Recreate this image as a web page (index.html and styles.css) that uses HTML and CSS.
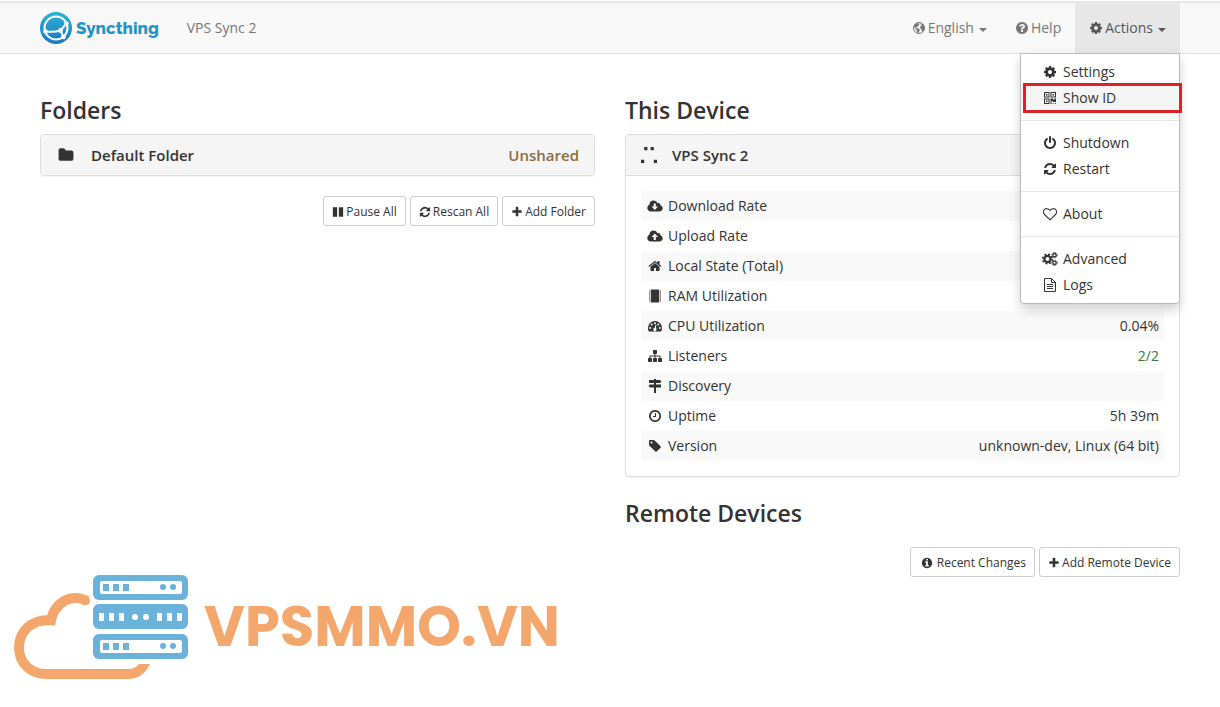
FILE: index.html
```
<!DOCTYPE html>
<html lang="en">
<head>
    <meta charset="UTF-8">
    <meta name="viewport" content="width=device-width, initial-scale=1.0">
    <title>VPS Sync 2 | Syncthing</title>
    <link rel="stylesheet" href="styles.css">
</head>
<body>
    <svg class="sprite" aria-hidden="true">
        <symbol id="cog" viewBox="0 0 1792 1792"><path d="M1152 896q0-106-75-181t-181-75-181 75-75 181 75 181 181 75 181-75 75-181zm512-109v222q0 12-8 23t-20 13l-185 28q-19 54-39 91 35 50 107 138 10 12 10 25t-9 23q-27 37-99 108t-94 71q-12 0-26-9l-138-108q-44 23-91 38-16 136-29 186-7 28-36 28h-222q-14 0-24.500-8.500t-11.500-21.500l-28-184q-49-16-90-37l-141 107q-10 9-25 9-14 0-25-11-126-114-165-168-7-10-7-23 0-12 8-23 15-21 51-66.500t54-70.500q-27-50-41-99l-183-27q-13-2-21-12.500t-8-23.500v-222q0-12 8-23t19-13l186-28q14-46 39-92-40-57-107-138-10-12-10-24 0-10 9-23 26-36 98.500-107.500t94.500-71.500q13 0 26 10l138 107q44-23 91-38 16-136 29-186 7-28 36-28h222q14 0 24.500 8.500t11.500 21.500l28 184q49 16 90 37l142-107q9-9 24-9 13 0 25 10 129 119 165 170 7 8 7 22 0 12-8 23-15 21-51 66.500t-54 70.500q26 50 41 98l183 28q13 2 21 12.500t8 23.500z"/></symbol>
        <symbol id="refresh" viewBox="0 0 1792 1792"><path d="M1639 1056q0 5-1 7-64 268-268 434.500t-478 166.500q-146 0-282.500-55t-243.500-157l-129 129q-19 19-45 19t-45-19-19-45v-448q0-26 19-45t45-19h448q26 0 45 19t19 45-19 45l-137 137q71 66 161 102t187 36q134 0 250-65t186-179q11-17 53-117 8-23 30-23h192q13 0 22.500 9.500t9.500 22.500zm25-800v448q0 26-19 45t-45 19h-448q-26 0-45-19t-19-45 19-45l138-138q-148-137-349-137-134 0-250 65t-186 179q-11 17-53 117-8 23-30 23h-199q-13 0-22.500-9.500t-9.500-22.500v-7q65-268 270-434.500t480-166.500q146 0 284 55.500t245 156.500l130-129q19-19 45-19t45 19 19 45z"/></symbol>
        <symbol id="power" viewBox="0 0 1792 1792"><path d="M1664 896q0 156-61 298t-164 245-245 164-298 61-298-61-245-164-164-245-61-298q0-182 80.500-343t226.500-270q43-32 95.500-25t83.500 50q32 42 24.500 94.500t-49.500 84.500q-98 74-151.500 181t-53.500 228q0 104 40.500 198.500t109.500 163.500 163.500 109.500 198.500 40.500 198.500-40.500 163.500-109.500 109.500-163.500 40.500-198.500q0-121-53.500-228t-151.500-181q-42-32-49.500-84.500t24.500-94.500q31-43 84-50t95 25q146 109 226.500 270t80.500 343zm-640-768v640q0 52-38 90t-90 38-90-38-38-90v-640q0-52 38-90t90-38 90 38 38 90z"/></symbol>
        <symbol id="plus" viewBox="0 0 1792 1792"><path d="M1600 736v192q0 40-28 68t-68 28h-416v416q0 40-28 68t-68 28h-192q-40 0-68-28t-28-68v-416h-416q-40 0-68-28t-28-68v-192q0-40 28-68t68-28h416v-416q0-40 28-68t68-28h192q40 0 68 28t28 68v416h416q40 0 68 28t28 68z"/></symbol>
        <symbol id="question" viewBox="0 0 1792 1792"><path d="M1024 1376v-192q0-14-9-23t-23-9h-192q-14 0-23 9t-9 23v192q0 14 9 23t23 9h192q14 0 23-9t9-23zm256-672q0-88-55.500-163t-138.500-116-170-41q-243 0-371 213-15 24 8 42l132 100q7 6 19 6 16 0 25-12 53-68 86-92 34-24 86-24 48 0 85.500 26t37.500 59q0 38-20 61t-68 45q-63 28-115.500 86.500t-52.500 125.500v36q0 14 9 23t23 9h192q14 0 23-9t9-23q0-19 21.500-49.500t54.500-49.500q32-18 49-28.500t46-35 44.500-48 28-60.500 12.500-81zm384 192q0 209-103 385.500t-279.500 279.500-385.500 103-385.500-103-279.500-279.500-103-385.500 103-385.500 279.500-279.500 385.500-103 385.500 103 279.500 279.500 103 385.500z"/></symbol>
        <symbol id="info" viewBox="0 0 1792 1792"><path d="M1152 1376v-160q0-14-9-23t-23-9h-96v-512q0-14-9-23t-23-9h-320q-14 0-23 9t-9 23v160q0 14 9 23t23 9h96v320h-96q-14 0-23 9t-9 23v160q0 14 9 23t23 9h448q14 0 23-9t9-23zm-128-896v-160q0-14-9-23t-23-9h-192q-14 0-23 9t-9 23v160q0 14 9 23t23 9h192q14 0 23-9t9-23zm640 416q0 209-103 385.500t-279.500 279.500-385.500 103-385.500-103-279.500-279.500-103-385.500 103-385.500 279.500-279.500 385.500-103 385.500 103 279.500 279.500 103 385.500z"/></symbol>
        <symbol id="clock" viewBox="0 0 1792 1792"><path d="M1024 544v448q0 14-9 23t-23 9h-320q-14 0-23-9t-9-23v-64q0-14 9-23t23-9h224v-352q0-14 9-23t23-9h64q14 0 23 9t9 23zm416 352q0-148-73-273t-198-198-273-73-273 73-198 198-73 273 73 273 198 198 273 73 273-73 198-198 73-273zm224 0q0 209-103 385.500t-279.500 279.500-385.500 103-385.500-103-279.500-279.500-103-385.500 103-385.500 279.500-279.500 385.500-103 385.500 103 279.500 279.500 103 385.500z"/></symbol>
        <symbol id="sitemap" viewBox="0 0 1792 1792"><path d="M1792 1248v320q0 40-28 68t-68 28h-320q-40 0-68-28t-28-68v-320q0-40 28-68t68-28h96v-192h-512v192h96q40 0 68 28t28 68v320q0 40-28 68t-68 28h-320q-40 0-68-28t-28-68v-320q0-40 28-68t68-28h96v-192h-512v192h96q40 0 68 28t28 68v320q0 40-28 68t-68 28h-320q-40 0-68-28t-28-68v-320q0-40 28-68t68-28h96v-192q0-52 38-90t90-38h512v-192h-96q-40 0-68-28t-28-68v-320q0-40 28-68t68-28h320q40 0 68 28t28 68v320q0 40-28 68t-68 28h-96v192h512q52 0 90 38t38 90v192h96q40 0 68 28t28 68z"/></symbol>
        <symbol id="folder" viewBox="0 0 1792 1792"><path d="M1728 608v704q0 92-66 158t-158 66h-1216q-92 0-158-66t-66-158v-960q0-92 66-158t158-66h320q92 0 158 66t66 158v32h672q92 0 158 66t66 158z"/></symbol>
        <symbol id="tag" viewBox="0 0 1792 1792"><path d="M576 448q0-53-37.500-90.500t-90.500-37.500-90.500 37.500-37.500 90.500 37.500 90.500 90.500 37.500 90.500-37.500 37.500-90.500zm1067 576q0 53-37 90l-491 492q-39 37-91 37-53 0-90-37l-715-716q-38-37-64.500-101t-26.500-117v-416q0-52 38-90t90-38h416q53 0 117 26.500t102 64.500l715 714q37 39 37 91z"/></symbol>
        <symbol id="home" viewBox="0 0 1792 1792"><path d="M1472 992v480q0 26-19 45t-45 19h-384v-384h-256v384h-384q-26 0-45-19t-19-45v-480q0-1 .5-3t.5-3l575-474 575 474q1 2 1 6zm223-69l-62 74q-8 9-21 11h-3q-13 0-21-7l-692-577-692 577q-12 8-24 7-13-2-21-11l-62-74q-8-10-7-23.500t11-21.500l719-599q32-26 76-26t76 26l244 204v-195q0-14 9-23t23-9h192q14 0 23 9t9 23v408l219 182q10 8 11 21.500t-7 23.500z"/></symbol>
        <symbol id="globe" viewBox="0 0 14 14"><circle cx="7" cy="7" r="5.500" fill="none" stroke="currentColor"/><path d="M2.500 3.500l2.500-1.500 2 .5.500 1-1.500 1 .5 1-2 .5-.5 1 2.500.5 1.500 1.500-1 1.500-.5 2-1.500-1.500-.5-2.500-1.500-1.500-1-2zM8.500 2l3 1.500 1 3-.5 3-2 1.500-.5-2.500-1.500-1.500.5-2 1.500-.5-1-1z"/></symbol>
        <symbol id="qrcode" viewBox="0 0 14 14"><path fill-rule="evenodd" d="M1 1h5.500v5.500H1zM2 2v3.500h3.500V2zM3 3h1.500v1.500H3zM7.500 1H13v5.500H7.500zM8.500 2v3.500H12V2zM9.500 3H11v1.500H9.500zM1 7.500h5.500V13H1zM2 8.500V12h3.500V8.500zM3 9.500h1.500V11H3zM7.500 7.500h2.500v1h1.500v-1H13v3.500h-3v-1H8.500v3h-1zM9.500 12h1v1h-1zM12 12h1v1h-1z"/></symbol>
        <symbol id="heart" viewBox="0 0 14 14"><path fill="none" stroke="currentColor" stroke-width="1.100" d="M7 12.800L1.500 7.500C.2 6.200.1 4.300 1 3 2.300 1 5.200 1.300 7 3.500 8.800 1.300 11.700 1 13 3c.9 1.300.8 3.200-.5 4.500z"/></symbol>
        <symbol id="cogs" viewBox="0 0 16 14"><g fill="none" stroke="currentColor"><circle cx="5.500" cy="7" r="3.100" stroke-width="2.200"/><circle cx="5.500" cy="7" r="4.700" stroke-width="1.800" stroke-dasharray="1.850 1.840"/><circle cx="12.500" cy="3.200" r="1.700" stroke-width="1.300"/><circle cx="12.500" cy="3.200" r="2.700" stroke-dasharray="1.100 1.020"/><circle cx="12.500" cy="10.800" r="1.700" stroke-width="1.300"/><circle cx="12.500" cy="10.800" r="2.700" stroke-dasharray="1.100 1.020"/></g></symbol>
        <symbol id="file" viewBox="0 0 14 14"><path fill="none" stroke="currentColor" d="M1.500.5h7l4 4v9h-11zM8.500.5v4h4M4 6.500h6M4 8.500h6M4 10.500h6"/></symbol>
        <symbol id="download" viewBox="0 0 16 14"><path fill-rule="evenodd" d="M4 12.500C1.800 12.500.3 11 .3 9c0-1.500.8-2.600 2.100-3.200C2.200 3.200 4.200 1.500 6.500 1.500c1.900 0 3.300 1 3.900 2.700 1.500-.8 3.200.3 3 2.100 1.400.4 2.300 1.600 2.300 3 0 1.800-1.400 3.200-3.200 3.200zM6.700 4.500v3H4.500L7.800 11 11 7.500H8.800v-3z"/></symbol>
        <symbol id="upload" viewBox="0 0 16 14"><path fill-rule="evenodd" d="M4 12.500C1.800 12.500.3 11 .3 9c0-1.500.8-2.600 2.100-3.200C2.200 3.200 4.200 1.500 6.500 1.500c1.900 0 3.300 1 3.900 2.700 1.500-.8 3.200.3 3 2.100 1.400.4 2.300 1.600 2.300 3 0 1.800-1.400 3.200-3.200 3.200zM6.700 11V8H4.500l3.300-3.500L11 8H8.800v3z"/></symbol>
        <symbol id="chip" viewBox="0 0 14 14"><path d="M3 .5h8v13H3zM1 1.500h1.500v1H1zM1 3.500h1.500v1H1zM1 5.500h1.500v1H1zM1 7.500h1.500v1H1zM1 9.500h1.500v1H1zM1 11.500h1.500v1H1zM11.500 1.500H13v1h-1.500zM11.500 3.500H13v1h-1.500zM11.500 5.500H13v1h-1.500zM11.500 7.500H13v1h-1.500zM11.500 9.500H13v1h-1.500zM11.500 11.500H13v1h-1.500z"/></symbol>
        <symbol id="gauge" viewBox="0 0 16 14"><path d="M1.800 12.500A7 7 0 0 1 1 9a7 7 0 0 1 14 0c0 1.300-.3 2.500-.8 3.500z"/><g fill="#fff"><circle cx="3.200" cy="9" r="1"/><circle cx="4.700" cy="5.600" r="1"/><circle cx="8" cy="4.200" r="1"/><circle cx="11.300" cy="5.600" r="1"/><circle cx="12.800" cy="9" r="1"/><path d="M8.600 5.800l.9.300-.6 3a1.600 1.600 0 1 1-1.100-.3z"/></g></symbol>
        <symbol id="signs" viewBox="0 0 14 14"><path d="M6 0h2v1h4l1.500 1.500L12 4H8v1.500h5v3H8V14H6V8.500H2L.5 7 2 5.500h4V4H1V1h5z"/></symbol>
        <symbol id="pause" viewBox="0 0 14 14"><path d="M1 1.500h5v11H1zM8 1.500h5v11H8z"/></symbol>
    </svg>

    <nav class="navbar">
        <div class="container navbar-inner">
            <a class="brand" href="#">
                <svg class="brand-mark" viewBox="0 0 32 32" aria-hidden="true">
                    <defs>
                        <linearGradient id="brand-fill" x1="0" y1="0" x2="0" y2="1">
                            <stop offset="0" stop-color="#29b6d6"/>
                            <stop offset="1" stop-color="#1c76bb"/>
                        </linearGradient>
                    </defs>
                    <circle cx="16" cy="16" r="16" fill="url(#brand-fill)"/>
                    <g fill="none" stroke="#fff" stroke-width="2">
                        <circle cx="16" cy="16" r="11.500"/>
                        <path d="M26.500 11.500L20.500 18.500 23.500 25M20.500 18.500Q14 20.500 5.500 19.500"/>
                    </g>
                    <g fill="#fff">
                        <circle cx="26.500" cy="11.500" r="2.300"/>
                        <circle cx="20.500" cy="18.500" r="2.400"/>
                        <circle cx="23.500" cy="25" r="2.300"/>
                        <circle cx="5.500" cy="19.500" r="2.300"/>
                    </g>
                </svg>
                <span>Syncthing</span>
            </a>
            <span class="device-name">VPS Sync 2</span>
            <ul class="nav">
                <li><a href="#"><svg class="icon"><use href="#globe"/></svg> English <span class="caret"></span></a></li>
                <li><a href="#"><svg class="icon"><use href="#question"/></svg> Help</a></li>
                <li class="open">
                    <a href="#"><svg class="icon"><use href="#cog"/></svg> Actions <span class="caret"></span></a>
                    <ul class="dropdown">
                        <li><a href="#"><svg class="icon"><use href="#cog"/></svg>Settings</a></li>
                        <li class="highlight"><a href="#"><svg class="icon"><use href="#qrcode"/></svg>Show ID</a></li>
                        <li class="divider"></li>
                        <li><a href="#"><svg class="icon"><use href="#power"/></svg>Shutdown</a></li>
                        <li><a href="#"><svg class="icon"><use href="#refresh"/></svg>Restart</a></li>
                        <li class="divider"></li>
                        <li><a href="#"><svg class="icon"><use href="#heart"/></svg>About</a></li>
                        <li class="divider"></li>
                        <li><a href="#"><svg class="icon cogs"><use href="#cogs"/></svg>Advanced</a></li>
                        <li><a href="#"><svg class="icon"><use href="#file"/></svg>Logs</a></li>
                    </ul>
                </li>
            </ul>
        </div>
    </nav>

    <main class="container columns">
        <section>
            <h3>Folders</h3>
            <div class="panel">
                <button class="panel-heading">
                    <svg class="icon panel-icon"><use href="#folder"/></svg>
                    <span class="panel-title">Default Folder</span>
                    <span class="status">Unshared</span>
                </button>
            </div>
            <div class="buttons">
                <button class="btn"><svg class="icon"><use href="#pause"/></svg>Pause All</button>
                <button class="btn"><svg class="icon"><use href="#refresh"/></svg>Rescan All</button>
                <button class="btn"><svg class="icon"><use href="#plus"/></svg>Add Folder</button>
            </div>
        </section>

        <section>
            <h3>This Device</h3>
            <div class="panel">
                <button class="panel-heading">
                    <svg class="identicon" viewBox="0 0 5 5"><path d="M1 0h1v1H1zM3 0h1v1H3zM0 4h1v1H0zM4 4h1v1H4z"/></svg>
                    <span class="panel-title">VPS Sync 2</span>
                </button>
                <div class="panel-body">
                    <table>
                        <tbody>
                            <tr><th><svg class="icon"><use href="#download"/></svg>Download Rate</th><td></td></tr>
                            <tr><th><svg class="icon"><use href="#upload"/></svg>Upload Rate</th><td></td></tr>
                            <tr><th><svg class="icon"><use href="#home"/></svg>Local State (Total)</th><td></td></tr>
                            <tr><th><svg class="icon"><use href="#chip"/></svg>RAM Utilization</th><td></td></tr>
                            <tr><th><svg class="icon"><use href="#gauge"/></svg>CPU Utilization</th><td>0.04%</td></tr>
                            <tr><th><svg class="icon"><use href="#sitemap"/></svg>Listeners</th><td class="success">2/2</td></tr>
                            <tr><th><svg class="icon"><use href="#signs"/></svg>Discovery</th><td></td></tr>
                            <tr><th><svg class="icon"><use href="#clock"/></svg>Uptime</th><td>5h 39m</td></tr>
                            <tr><th><svg class="icon"><use href="#tag"/></svg>Version</th><td>unknown-dev, Linux (64 bit)</td></tr>
                        </tbody>
                    </table>
                </div>
            </div>
            <h3 class="remote-title">Remote Devices</h3>
            <div class="buttons">
                <button class="btn"><svg class="icon wide"><use href="#info"/></svg>Recent Changes</button>
                <button class="btn"><svg class="icon"><use href="#plus"/></svg>Add Remote Device</button>
            </div>
        </section>
    </main>

    <div class="watermark">
        <svg viewBox="0 0 176 106" aria-hidden="true">
            <path d="M74 27C58 19 40 28 37 51M39 46C18 45 6 57 6 74c0 15 12 26 27 26h83" fill="none" stroke="#f4a76d" stroke-width="10"/>
            <circle cx="73" cy="27" r="4" fill="#f4a76d"/>
            <path d="M115 95q7 0 11-5h11q-7 15-22 15z" fill="#f4a76d"/>
            <g fill="#6ab2d9">
                <rect x="80" y="1" width="95" height="25" rx="6"/>
                <rect x="80" y="30" width="95" height="25" rx="6"/>
                <rect x="80" y="60" width="95" height="25" rx="6"/>
            </g>
            <g fill="#fff">
                <rect x="87" y="7" width="82" height="13" rx="2"/>
                <rect x="87" y="66" width="82" height="13" rx="2"/>
                <path d="M86 39h5v8h-5zM96 39h5v8h-5zM106 39h5v8h-5zM144 39h5v8h-5zM154 39h5v8h-5zM164 39h5v8h-5z"/>
                <circle cx="122" cy="43" r="3"/>
                <circle cx="133" cy="43" r="3"/>
            </g>
            <g fill="#6ab2d9">
                <path d="M90 10h6v7h-6zM100 10h6v7h-6zM110 10h6v7h-6zM90 69h6v7h-6zM100 69h6v7h-6zM110 69h6v7h-6z"/>
                <circle cx="150" cy="13" r="3"/>
                <circle cx="160" cy="13" r="3"/>
                <circle cx="150" cy="72" r="3"/>
                <circle cx="160" cy="72" r="3"/>
            </g>
        </svg>
        <span>VPSMMO.VN</span>
    </div>
</body>
</html>
```
FILE: styles.css
```
:root {
    --text-color: #333;
    --muted-color: #777;
    --border-color: #ddd;
    --heading-background: #f5f5f5;
    --stripe-color: #f9f9f9;
}

* {
    margin: 0;
    padding: 0;
    box-sizing: border-box;
}

body {
    padding-top: 1px;
    font-family: "Segoe UI", "Open Sans", "Noto Sans", sans-serif;
    font-size: 14px;
    line-height: 20px;
    color: var(--text-color);
    background: white;
}

a {
    color: inherit;
    text-decoration: none;
}

ul {
    list-style: none;
}

button {
    font: inherit;
    color: inherit;
    cursor: pointer;
}

.sprite {
    display: none;
}

.icon {
    width: 14px;
    height: 14px;
    flex: none;
    fill: currentColor;
}

.container {
    width: 100%;
    max-width: 1170px;
    margin: 0 auto;
    padding: 0 15px;
}

/* Navigation */
.navbar {
    background: #f8f8f8;
    border-top: 2px solid #e4e7e6;
    border-bottom: 1px solid #e2e5e4;
}

.navbar-inner {
    display: flex;
    align-items: center;
}

.brand {
    display: flex;
    align-items: center;
    gap: 4px;
    font-family: Raleway, Montserrat, Inter, sans-serif;
    font-size: 17px;
    font-weight: 800;
    color: #2493c8;
}

.brand-mark {
    width: 32px;
    height: 32px;
}

.device-name {
    margin-left: 28px;
    color: var(--muted-color);
}

.nav {
    display: flex;
    margin-left: auto;
    color: var(--muted-color);
}

.nav > li {
    position: relative;
}

.nav > li > a {
    display: flex;
    align-items: center;
    gap: 2px;
    padding: 15px 14px;
}

.nav > .open > a {
    background: #e7e7e7;
    color: #555;
}

.caret {
    margin: 3px 0 0 3px;
    border-top: 4px solid;
    border-left: 4px solid transparent;
    border-right: 4px solid transparent;
}

.dropdown {
    position: absolute;
    top: 100%;
    right: 0;
    z-index: 10;
    min-width: 160px;
    padding: 5px 0;
    background: white;
    border: 1px solid #bbb;
    border-radius: 0 0 4px 4px;
    box-shadow: 0 6px 12px rgba(0,0,0,0.18);
    color: var(--text-color);
}

.dropdown a {
    display: flex;
    align-items: center;
    gap: 6px;
    padding: 3px 22px;
}

.dropdown a:hover,
.highlight a {
    background: var(--heading-background);
}

.dropdown .cogs {
    width: 16px;
    height: 16px;
    margin: 0 -1px;
}

.dropdown .divider {
    height: 1px;
    margin: 9px 0;
    background: #e5e5e5;
}

.highlight {
    position: relative;
}

/* Frame over the highlighted entry, slightly wider than the menu */
.highlight::after {
    content: "";
    position: absolute;
    inset: -2px -3px -2px 2px;
    border: 3px solid #dc2127;
}

/* Columns */
.columns {
    display: grid;
    grid-template-columns: 1fr 1fr;
    gap: 30px;
    padding-top: 43px;
}

h3 {
    margin-bottom: 11px;
    font-size: 23px;
    font-weight: 600;
    line-height: 26px;
}

.remote-title {
    margin: 23px 0 21px;
}

.panel {
    margin-bottom: 20px;
    border: 1px solid var(--border-color);
    border-radius: 4px;
    box-shadow: 0 1px 1px rgba(0,0,0,0.05);
}

.panel-heading {
    display: flex;
    align-items: center;
    gap: 15px;
    width: 100%;
    padding: 10px 15px;
    background: var(--heading-background);
    border: 0;
    border-radius: 3px;
    font-size: 15px;
    font-weight: 600;
}

.panel-icon {
    width: 20px;
    height: 16px;
}

.identicon {
    width: 16px;
    height: 16px;
    fill: var(--text-color);
}

.status {
    margin-left: auto;
    color: #8a6d3b;
}

.panel-body {
    padding: 15px;
    border-top: 1px solid var(--border-color);
}

.buttons {
    display: flex;
    justify-content: flex-end;
    gap: 4px;
}

.btn {
    display: flex;
    align-items: center;
    gap: 2px;
    height: 30px;
    padding: 2px 8px 0;
    background: white;
    border: 1px solid #ccc;
    border-radius: 3px;
    font-size: 12px;
}

.btn .icon {
    width: 12px;
    height: 12px;
}

.btn .wide {
    width: 16px;
}

.btn:hover {
    background: #e6e6e6;
}

table {
    width: 100%;
    border-collapse: collapse;
}

tr:nth-child(odd) {
    background: var(--stripe-color);
}

th,
td {
    height: 30px;
    padding: 5px;
    font-weight: 400;
    text-align: left;
}

th .icon {
    width: 18px;
    margin-right: 4px;
    vertical-align: -2px;
}

td {
    text-align: right;
}

.success {
    color: #3c763d;
}

/* Watermark */
.watermark {
    position: absolute;
    left: 13px;
    top: 574px;
    display: flex;
    align-items: center;
    gap: 15px;
    font-family: Poppins, Inter, sans-serif;
    font-size: 56px;
    font-weight: 700;
    line-height: 64px;
    color: #f4a76d;
}

.watermark svg {
    width: 176px;
    height: 106px;
}

@media (max-width: 768px) {
    .columns {
        grid-template-columns: 1fr;
    }

    .watermark {
        position: static;
        padding: 20px 15px;
    }
}
```
